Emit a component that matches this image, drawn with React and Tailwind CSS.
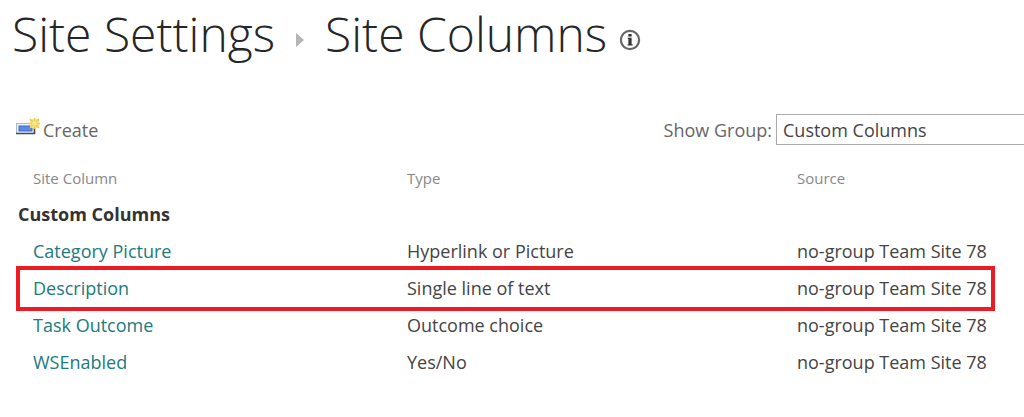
import React, { useState } from 'react';

const columns = [
  { name: 'Category Picture', type: 'Hyperlink or Picture', source: 'no-group Team Site 78' },
  { name: 'Description', type: 'Single line of text', source: 'no-group Team Site 78', highlighted: true },
  { name: 'Task Outcome', type: 'Outcome choice', source: 'no-group Team Site 78' },
  { name: 'WSEnabled', type: 'Yes/No', source: 'no-group Team Site 78' },
];

function CreateIcon() {
  return (
    <svg width="24" height="24" viewBox="0 0 24 24" aria-hidden="true">
      <rect x="0.5" y="5.5" width="18" height="10" fill="#eef3fa" stroke="#a9b9d0" />
      <path d="M0 15.5H19M18.5 7V16" stroke="#3b4a66" strokeWidth="1.6" fill="none" />
      <rect x="3" y="8" width="13" height="5" fill="#5a8ae6" stroke="#3f69c8" />
      <rect x="14" y="1" width="9" height="9" fill="#f9e48c" />
      <path
        d="M18.5 0V11M13 5.5H24M14 1L23 10M23 1L14 10"
        stroke="#ecc94b"
        strokeWidth="1.4"
      />
      <circle cx="18.5" cy="5.5" r="2.4" fill="#fbe88f" />
    </svg>
  );
}

function InfoIcon() {
  return (
    <svg width="22" height="22" viewBox="0 0 22 22" aria-hidden="true">
      <circle cx="11" cy="11" r="9.1" fill="none" stroke="#666" strokeWidth="2.2" />
      <rect x="9.4" y="5" width="3.2" height="2.6" fill="#333" />
      <path d="M8.8 8.8H12.6V15.2H13.6V16.4H8.6V15.2H9.4V10H8.8Z" fill="#333" />
    </svg>
  );
}

function App() {
  const [group, setGroup] = useState('Custom Columns');

  return (
    <div className="overflow-hidden bg-white font-['Open_Sans','Noto_Sans',sans-serif] text-lg text-[#444]">
      {/* Breadcrumb title */}
      <header className="flex items-center pl-3 pt-1">
        <h1 className="flex items-center whitespace-nowrap text-5xl leading-[60px] font-light text-[#262626]">
          <span>Site Settings</span>
          <svg className="mx-[21px] mt-3" width="8" height="14" viewBox="0 0 8 14" aria-hidden="true">
            <path d="M0 0L8 7L0 14Z" fill="#b5b5b5" />
          </svg>
          <span>Site Columns</span>
        </h1>
        <button type="button" aria-label="Description" className="ml-3 mt-3">
          <InfoIcon />
        </button>
      </header>

      {/* Toolbar */}
      <div className="mt-[50px] flex h-[31px] items-center justify-between pl-4 text-[#666]">
        <button type="button" className="flex items-center gap-[3px]">
          <CreateIcon />
          Create
        </button>
        <div className="flex items-center gap-1">
          <label htmlFor="group">Show Group:</label>
          <select
            id="group"
            value={group}
            onChange={(e) => setGroup(e.target.value)}
            className="h-[31px] w-[248px] appearance-none border border-r-0 border-[#ababab] bg-white px-1.5 text-[#444]"
          >
            <option>Custom Columns</option>
          </select>
        </div>
      </div>

      <table className="ml-[18px] mt-4 w-[calc(100%-18px)] table-fixed border-collapse text-left whitespace-nowrap">
        <thead className="text-[15px] text-[#888]">
          <tr className="h-[35px]">
            <th className="w-[389px] pl-[15px] font-normal">Site Column</th>
            <th className="w-[390px] font-normal">Type</th>
            <th className="font-normal">Source</th>
          </tr>
        </thead>
        <tbody>
          <tr className="h-9">
            <th colSpan={3} className="font-bold text-[#333]">Custom Columns</th>
          </tr>
          {columns.map((column) => (
            <tr key={column.name} className="relative h-[37px]">
              <td className="pl-[15px]">
                <a href="#" className="text-[#217a7e]">{column.name}</a>
                {column.highlighted && (
                  <span className="pointer-events-none absolute -top-[3px] -bottom-[5px] -left-0.5 right-[29px] border-4 border-[#ed1c24]" />
                )}
              </td>
              <td>{column.type}</td>
              <td>{column.source}</td>
            </tr>
          ))}
        </tbody>
      </table>
    </div>
  );
}

export default App;
